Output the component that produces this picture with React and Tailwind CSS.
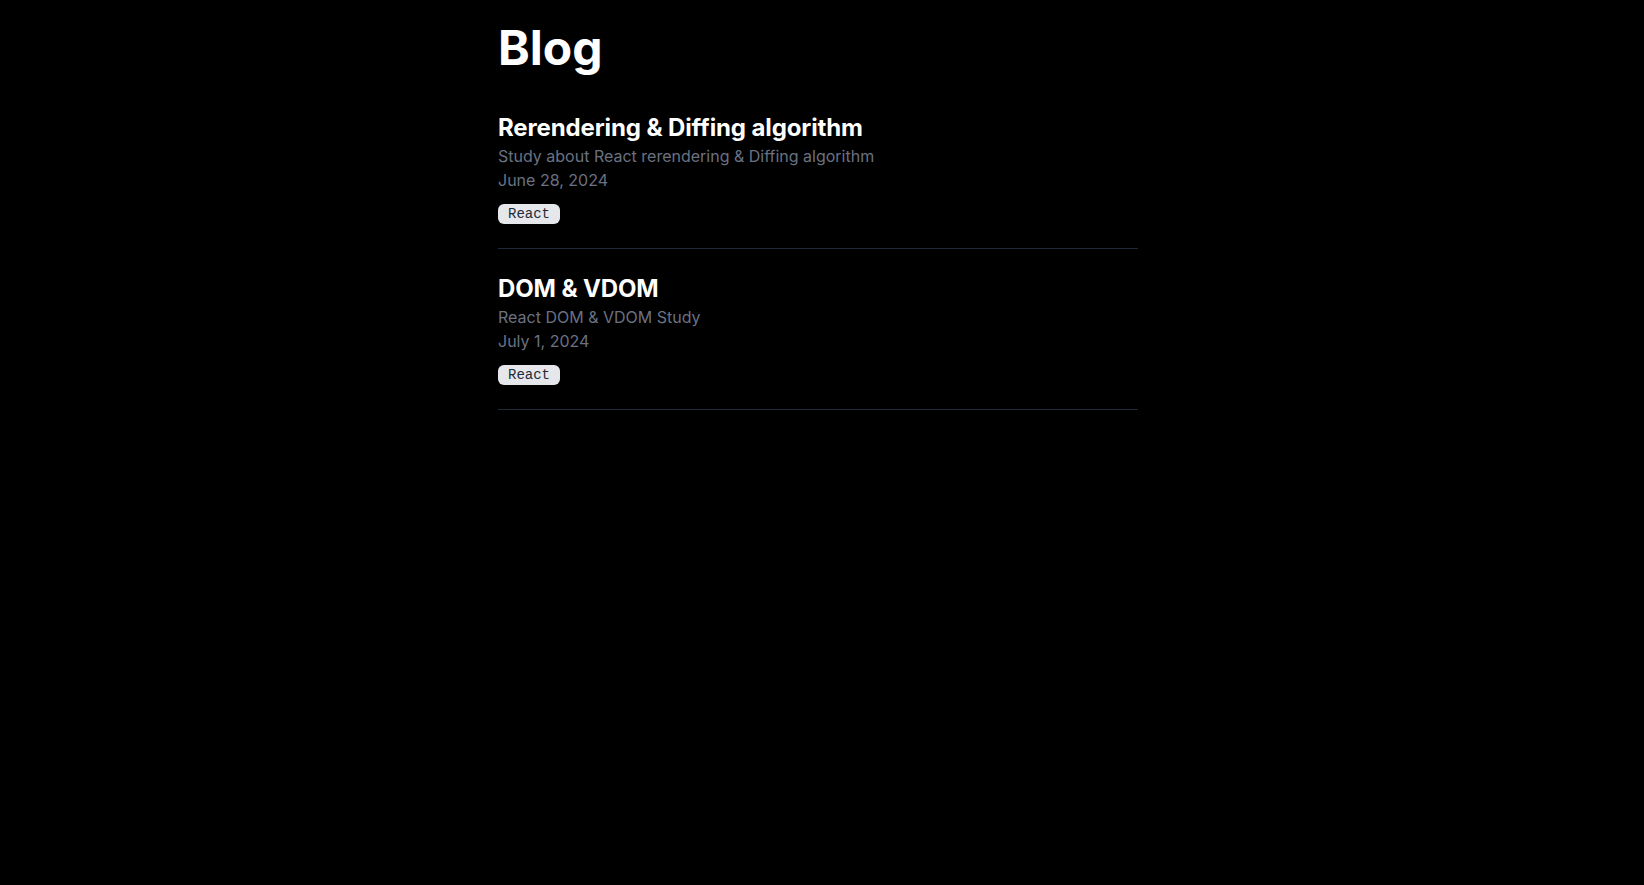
import React from "react";

const posts = [
  {
    title: "Rerendering & Diffing algorithm",
    description: "Study about React rerendering & Diffing algorithm",
    date: "June 28, 2024",
    tags: ["React"],
  },
  {
    title: "DOM & VDOM",
    description: "React DOM & VDOM Study",
    date: "July 1, 2024",
    tags: ["React"],
  },
];

const PostItem = ({ post }) => {
  return (
    <article className="border-b border-gray-800 pt-6 pb-6">
      <h2 className="text-2xl font-bold tracking-[-0.005em] text-white">{post.title}</h2>
      <p className="text-base text-gray-500">{post.description}</p>
      <p className="text-base text-gray-500">{post.date}</p>
      <div className="mt-3 flex gap-2">
        {post.tags.map((tag) => (
          <span
            key={tag}
            className="rounded-md bg-gray-200 px-2.5 text-[14px] leading-5 text-gray-800 font-['Liberation_Mono',monospace]"
          >
            {tag}
          </span>
        ))}
      </div>
    </article>
  );
};

const App = () => {
  return (
    <div className="min-h-screen bg-black pr-2 font-['Inter',sans-serif]">
      <main className="mx-auto w-[640px] pt-6">
        <h1 className="mb-4 text-5xl leading-none font-bold text-white">Blog</h1>
        <div className="flex flex-col">
          {posts.map((post) => (
            <PostItem key={post.title} post={post} />
          ))}
        </div>
      </main>
    </div>
  );
};

export default App;
